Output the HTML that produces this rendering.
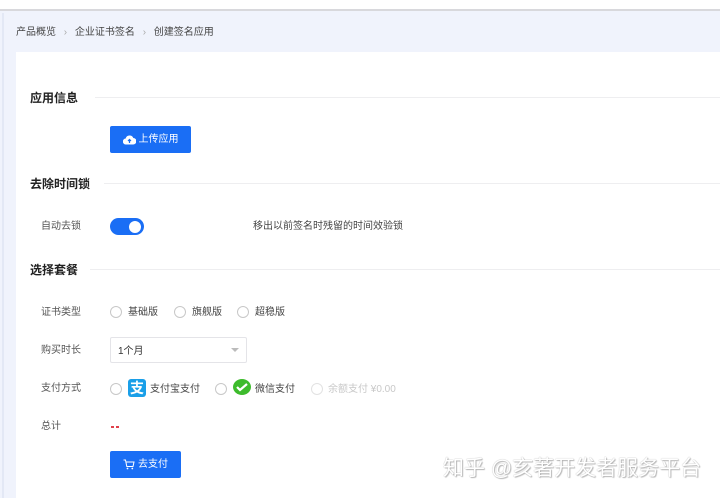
<!DOCTYPE html>
<html><head><meta charset="utf-8"><style>
*{margin:0;padding:0;box-sizing:border-box}
body{width:720px;height:498px;overflow:hidden;background:#f0f3fc;font-family:"Liberation Sans","Noto Sans CJK SC",sans-serif;position:relative;color:#333}
.a{position:absolute;white-space:nowrap;line-height:1.2}
.top{left:0;top:0;width:720px;height:11px;background:#fff;border-bottom:2px solid #d8d8dc}
.card{left:16px;top:52px;width:704px;height:446px;background:#fff}
.bc{font-size:10px;color:#444;top:27px}
.h{font-size:12px;font-weight:bold;color:#222}
.line{height:1px;background:#eeeef0}
.lbl{font-size:10px;color:#555}
.btn{background:#1a6ef5;color:#fff;font-size:10px;border-radius:2px;display:flex;align-items:center;justify-content:center;gap:3px}
.radio{width:12px;height:12px;border:1px solid #c8c8c8;border-radius:50%;background:#fff}
.opt{font-size:10px;color:#444}
</style></head><body>
<div class="a top"></div>
<div class="a" style="left:2px;top:13px;width:2px;height:485px;background:#e3e8f5"></div>
<div class="a bc" style="left:16px">产品概览 <span style="color:#aaa;margin:0 5px">›</span> 企业证书签名 <span style="color:#aaa;margin:0 5px">›</span> 创建签名应用</div>
<div class="a card"></div>
<div class="a h" style="left:30px;top:91px">应用信息</div>
<div class="a line" style="left:95px;top:97px;width:625px"></div>
<div class="a btn" style="left:110px;top:126px;width:81px;height:27px"><svg width="13" height="10" viewBox="0 0 13 10"><path d="M3 9.5a3 3 0 0 1-.3-6A4 4 0 0 1 10.3 3a3.2 3.2 0 0 1-.3 6.5z" fill="#fff"/><path d="M6.5 8V4.5M5 6l1.5-1.5L8 6" stroke="#1a6ef5" stroke-width="1.2" fill="none"/></svg>上传应用</div>
<div class="a h" style="left:30px;top:177px">去除时间锁</div>
<div class="a line" style="left:104px;top:183px;width:616px"></div>
<div class="a lbl" style="left:41px;top:221px">自动去锁</div>
<div class="a" style="left:110px;top:218px;width:34px;height:17px;border-radius:9px;background:#1a6ef5"><div class="a" style="left:19px;top:2.5px;width:12px;height:12px;border-radius:50%;background:#fff"></div></div>
<div class="a lbl" style="left:253px;top:221px;color:#444">移出以前签名时残留的时间效验锁</div>
<div class="a h" style="left:30px;top:263px">选择套餐</div>
<div class="a line" style="left:90px;top:269px;width:630px"></div>
<div class="a lbl" style="left:41px;top:307px">证书类型</div>
<div class="a radio" style="left:110px;top:306px"></div><div class="a opt" style="left:128px;top:307px">基础版</div>
<div class="a radio" style="left:174px;top:306px"></div><div class="a opt" style="left:192px;top:307px">旗舰版</div>
<div class="a radio" style="left:237px;top:306px"></div><div class="a opt" style="left:255px;top:307px">超稳版</div>
<div class="a lbl" style="left:41px;top:345px">购买时长</div>
<div class="a" style="left:110px;top:337px;width:137px;height:26px;border:1px solid #e4e4e8;border-radius:2px"></div>
<div class="a opt" style="left:118px;top:346px;color:#333">1个月</div>
<div class="a" style="left:231px;top:348px;width:0;height:0;border-left:4px solid transparent;border-right:4px solid transparent;border-top:4px solid #bbb"></div>
<div class="a lbl" style="left:41px;top:383px">支付方式</div>
<div class="a radio" style="left:110px;top:383px"></div>
<div class="a" style="left:128px;top:379px;width:18px;height:18px;background:#1a9fe8;border-radius:3px;color:#fff;font-size:14px;font-weight:bold;line-height:18px;text-align:center">支</div>
<div class="a opt" style="left:150px;top:384px">支付宝支付</div>
<div class="a radio" style="left:215px;top:383px"></div>
<div class="a" style="left:233px;top:379px;width:18px;height:16px;background:#3dbb2c;border-radius:50%"><svg width="18" height="16" viewBox="0 0 18 16"><path d="M4 8l3 3 7-6" stroke="#fff" stroke-width="2.2" fill="none"/></svg></div>
<div class="a opt" style="left:255px;top:384px">微信支付</div>
<div class="a radio" style="left:311px;top:383px;border-color:#e2e2e2"></div>
<div class="a opt" style="left:328px;top:384px;color:#c8c8c8">余额支付 ¥0.00</div>
<div class="a lbl" style="left:41px;top:421px">总计</div>
<div class="a" style="left:111px;top:426px;width:8px;height:2px;border-left:3px solid #e0404a;border-right:3px solid #e0404a"></div>
<div class="a btn" style="left:110px;top:451px;width:71px;height:27px"><svg width="12" height="11" viewBox="0 0 12 11"><path d="M.5 1H2.5L3.8 7.5H10L11 3H3" stroke="#fff" stroke-width="1" fill="none"/><circle cx="4.5" cy="9.5" r=".9" fill="#fff"/><circle cx="9.3" cy="9.5" r=".9" fill="#fff"/></svg>去支付</div>
<div class="a" style="left:443px;top:456px;font-size:21px;color:#fff;text-shadow:0 0 1px #999,1px 1px 1px #bbb;letter-spacing:0">知乎 @亥著开发者服务平台</div>
</body></html>
